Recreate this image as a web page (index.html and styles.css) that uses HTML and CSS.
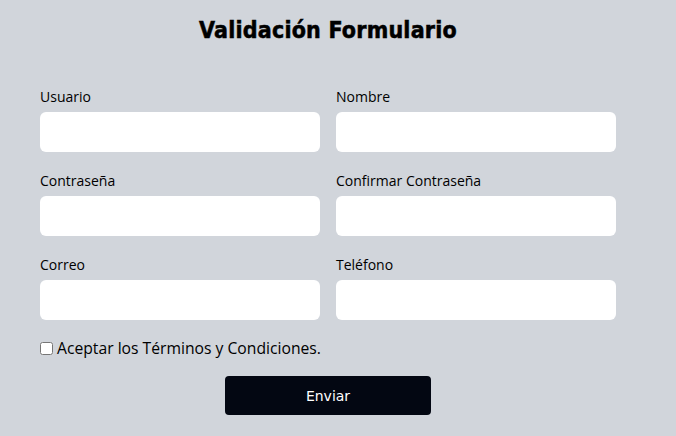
FILE: index.html
```html
<!DOCTYPE html>
<html lang="es">
<head>
<meta charset="utf-8">
<title>Validación Formulario</title>
<link rel="stylesheet" href="styles.css">
</head>
<body>
<main class="page">
  <h1 class="title">Validación Formulario</h1>
  <form class="form">
    <div class="grid">
      <div class="field">
        <label class="label" for="usuario">Usuario</label>
        <input class="input" id="usuario" type="text">
      </div>
      <div class="field">
        <label class="label" for="nombre">Nombre</label>
        <input class="input" id="nombre" type="text">
      </div>
      <div class="field">
        <label class="label" for="pass">Contraseña</label>
        <input class="input" id="pass" type="password">
      </div>
      <div class="field">
        <label class="label" for="pass2">Confirmar Contraseña</label>
        <input class="input" id="pass2" type="password">
      </div>
      <div class="field">
        <label class="label" for="correo">Correo</label>
        <input class="input" id="correo" type="email">
      </div>
      <div class="field">
        <label class="label" for="tel">Teléfono</label>
        <input class="input" id="tel" type="tel">
      </div>
    </div>
    <label class="terms"><input class="check" type="checkbox"> Aceptar los Términos y Condiciones.</label>
    <div class="actions">
      <button class="submit" type="button">Enviar</button>
    </div>
  </form>
</main>
</body>
</html>
```

FILE: styles.css
```css
* { box-sizing: border-box; }
html, body { margin: 0; padding: 0; }
body {
  background: #d1d5db;
  font-family: "Open Sans", "Noto Sans", sans-serif;
  color: #000;
  width: 676px;
  height: 436px;
  overflow: hidden;
}
.page {
  width: 576px;
  margin-left: 40px;
  padding-top: 15px;
}
.title {
  margin: 0;
  text-align: center;
  font-family: "DejaVu Sans Condensed", "DejaVu Sans", sans-serif;
  font-stretch: condensed;
  font-weight: bold;
  font-size: 23px;
  line-height: 30px;
  letter-spacing: 0.2px;
  -webkit-text-stroke: 0.5px #000;
}
.form {
  margin-top: 43px;
}
.grid {
  display: grid;
  grid-template-columns: 280px 280px;
  column-gap: 16px;
  row-gap: 20px;
}
.field {
  display: flex;
  flex-direction: column;
}
.label {
  font-size: 14px;
  line-height: 18px;
  height: 24px;
}
.input {
  height: 40px;
  border: none;
  border-radius: 6px;
  background: #fff;
  outline: none;
}
.terms {
  display: flex;
  align-items: center;
  gap: 4px;
  margin-top: 18px;
  font-size: 15.7px;
  line-height: 20px;
}
.check {
  margin: 0;
  width: 13px;
  height: 13px;
}
.actions {
  display: flex;
  justify-content: center;
  margin-top: 18px;
}
.submit {
  width: 206px;
  height: 39px;
  border: none;
  border-radius: 4px;
  background: #030712;
  color: #fff;
  font-family: "DejaVu Sans", sans-serif;
  font-size: 14px;
}
```
